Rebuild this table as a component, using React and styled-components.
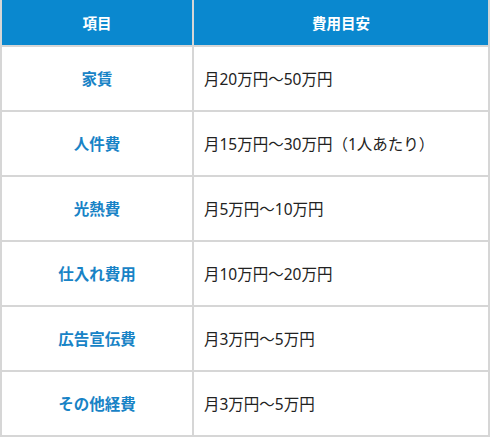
import React from "react";
import styled, { createGlobalStyle } from "styled-components";

const GlobalStyle = createGlobalStyle`
  body {
    margin: 0;
    background: #ffffff;
    font-family: "Noto Sans", "Noto Sans CJK JP", sans-serif;
  }
`;

const Table = styled.table`
  width: 490px;
  border-collapse: collapse;
  table-layout: fixed;
`;

const HeadCell = styled.th`
  height: 45px;
  padding: 0;
  background: #0a88cf;
  color: #ffffff;
  font-size: 14.5px;
  font-weight: 700;
  text-align: center;
  border: 2px solid #d6d6d6;
  border-top: none;
  width: ${(p) => p.$width || "auto"};
`;

const LabelCell = styled.td`
  height: 63px;
  padding: 0;
  color: #1883c6;
  font-size: 15.5px;
  font-weight: 700;
  text-align: center;
  border: 2px solid #d6d6d6;
`;

const ValueCell = styled.td`
  height: 63px;
  padding: 0 0 0 10px;
  color: #222222;
  font-size: 15.5px;
  font-weight: 400;
  text-align: left;
  border: 2px solid #d6d6d6;
`;

const rows = [
  ["家賃", "月20万円〜50万円"],
  ["人件費", "月15万円〜30万円（1人あたり）"],
  ["光熱費", "月5万円〜10万円"],
  ["仕入れ費用", "月10万円〜20万円"],
  ["広告宣伝費", "月3万円〜5万円"],
  ["その他経費", "月3万円〜5万円"],
];

export default function App() {
  return (
    <>
      <GlobalStyle />
      <Table>
        <thead>
          <tr>
            <HeadCell $width="190px">項目</HeadCell>
            <HeadCell>費用目安</HeadCell>
          </tr>
        </thead>
        <tbody>
          {rows.map(([label, value]) => (
            <tr key={label}>
              <LabelCell>{label}</LabelCell>
              <ValueCell>{value}</ValueCell>
            </tr>
          ))}
        </tbody>
      </Table>
    </>
  );
}
